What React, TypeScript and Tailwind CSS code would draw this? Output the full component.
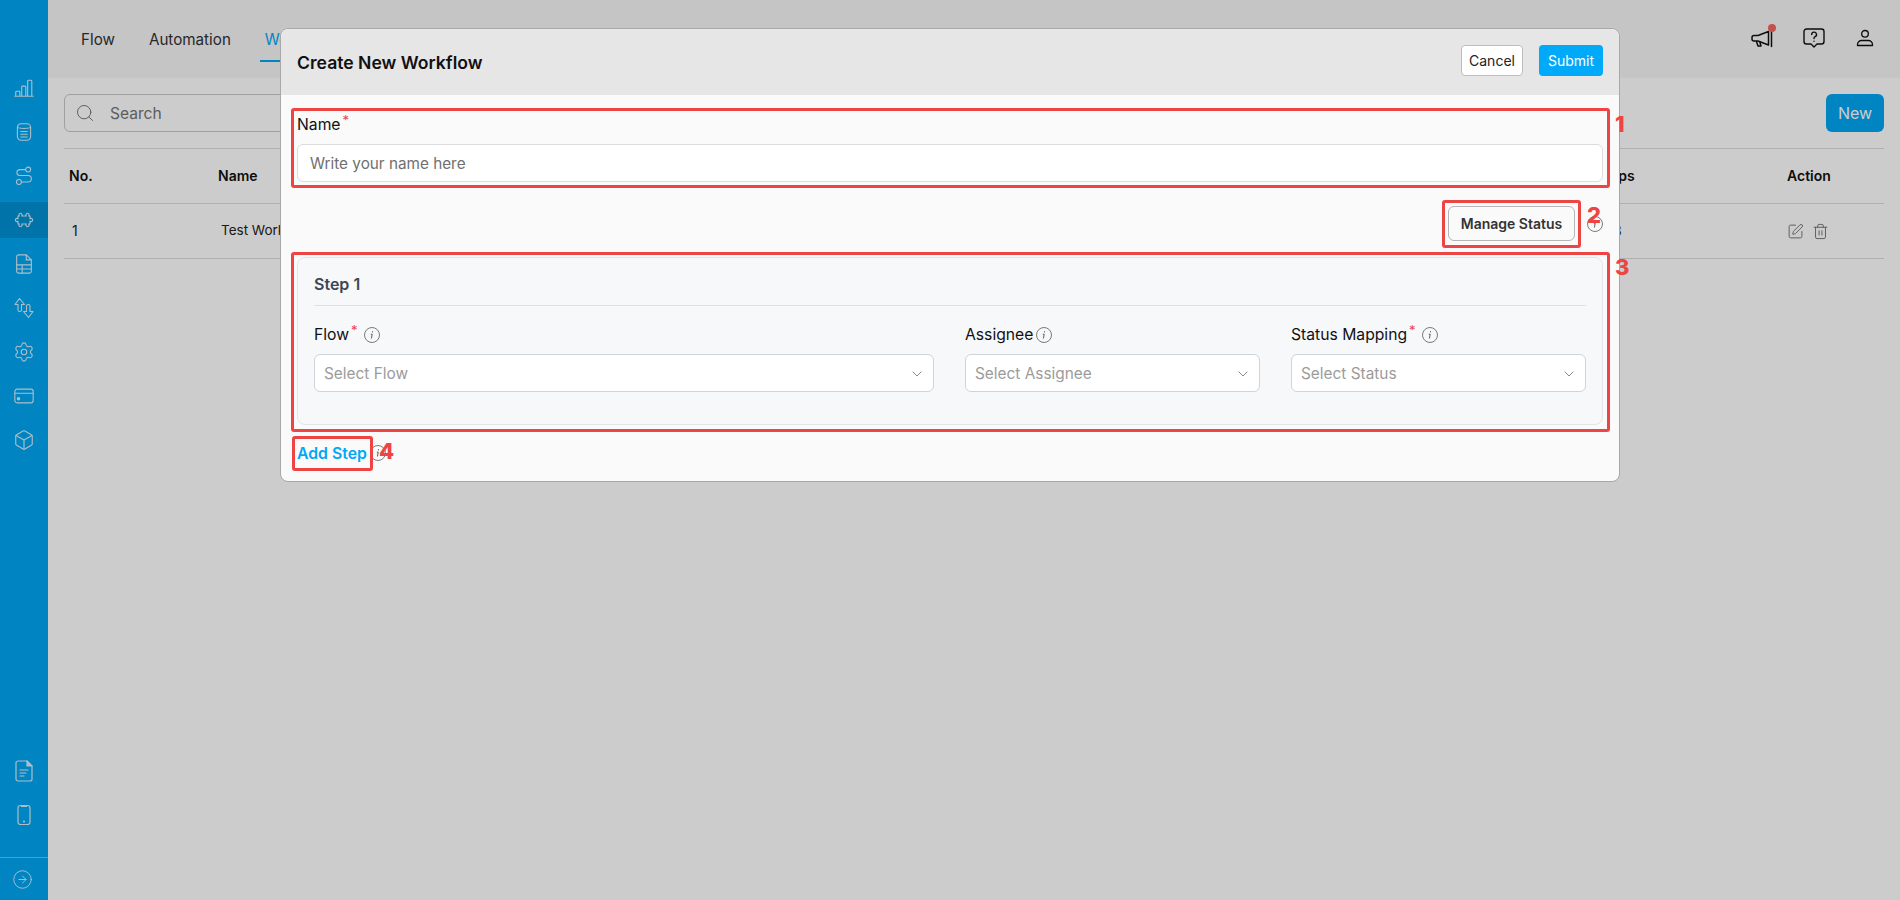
import { FC, ReactNode } from "react";
import { Box, ChevronDown, CircleArrowRight, Search, Settings, SquarePen, Trash2 } from "lucide-react";

const font = { fontFamily: "Inter, 'Noto Sans', sans-serif" };

const Ico: FC<{ children: ReactNode; className?: string; sw?: number }> = ({ children, className = "h-[22px] w-[22px]", sw = 1.2 }) => (
  <svg viewBox="0 0 24 24" fill="none" stroke="currentColor" strokeWidth={sw} strokeLinecap="round" strokeLinejoin="round" className={className}>
    {children}
  </svg>
);

// sidebar icons that the packages have no close match for
const BarsIcon = () => (
  <Ico>
    <path d="M2 21h20M3 21v-4.500a1 1 0 0 1 1-1h2.500a1 1 0 0 1 1 1V21M9.500 21V11a1 1 0 0 1 1-1H13a1 1 0 0 1 1 1v10M16 21V4.500a1 1 0 0 1 1-1h2.500a1 1 0 0 1 1 1V21" />
  </Ico>
);
const DbIcon = () => (
  <Ico>
    <rect x="4.800" y="3" width="14.400" height="18" rx="4" />
    <path d="M5 7c2 1.500 12 1.500 14 0M8.500 11.500h7M8.500 14.500h7M8.500 17.500h7" />
  </Ico>
);
const RouteIcon = () => (
  <Ico>
    <circle cx="16.500" cy="5" r="2.700" />
    <circle cx="6.500" cy="18.500" r="2.700" />
    <path d="M13.500 5H7.500a3 3 0 0 0 0 6.500h9a3.400 3.400 0 0 1 0 7H10" />
  </Ico>
);
const PuzzleIcon = () => (
  <Ico className="h-6 w-6" sw={1.1}>
    <path d="M6 8h1.300a1.600 1.600 0 1 1 2.400 0h4.600a1.600 1.600 0 1 1 2.400 0H18v2.800a1.600 1.600 0 1 1 0 2.400V16h-1.300a1.600 1.600 0 1 1-2.400 0H9.700a1.600 1.600 0 1 1-2.400 0H6v-2.800a1.600 1.600 0 1 1 0-2.400Z" />
  </Ico>
);
const SheetIcon = () => (
  <Ico>
    <path d="M6 2h8.500L20 7.500V20a2 2 0 0 1-2 2H6a2 2 0 0 1-2-2V4a2 2 0 0 1 2-2Z" />
    <path d="M14.500 2v5.500H20M4 13h16M4 17.500h16M10 13v9" />
  </Ico>
);
const SwapIcon = () => (
  <Ico className="h-6 w-6" sw={1.1}>
    <path d="M7.500 2.500 3 8.500h3v5.500c0 1 1 1.500 1.800 1.500S9.500 15 9.500 14V8.500h3ZM16.500 21.500l4.500-6h-3V10c0-1-1-1.500-1.800-1.500S14.500 9 14.500 10v5.500h-3Z" />
  </Ico>
);
const CardIcon = () => (
  <Ico>
    <rect x="2" y="4.500" width="20" height="15" rx="2.500" />
    <path d="M2 9h20" />
    <circle cx="6" cy="15" r="1.300" fill="currentColor" />
  </Ico>
);
const DocIcon = () => (
  <Ico className="h-6 w-6">
    <path d="M6 2h9l5 5v13a2 2 0 0 1-2 2H6a2 2 0 0 1-2-2V4a2 2 0 0 1 2-2Z" />
    <path d="M15 2v5h5Z" fill="currentColor" />
    <path d="M8 11h8M8 14h6M8 17h4" />
  </Ico>
);
const PhoneIcon = () => (
  <Ico className="h-6 w-6">
    <rect x="6" y="2.500" width="12" height="19" rx="2.500" />
    <path d="M9.500 3.500h5" />
    <circle cx="12" cy="18.500" r=".5" fill="currentColor" />
  </Ico>
);
const MegaphoneIcon = () => (
  <Ico className="h-6 w-6" sw={1.5}>
    <path d="M21.500 4.500v16" />
    <path d="M18.500 5.500 8 9.500H4a2 2 0 0 0-2 2v1.500a2 2 0 0 0 2 2h4l10.500 4Z" />
    <path d="M6.500 15.500 8 20h3l-1.200-4.200" />
  </Ico>
);
const HelpIcon = () => (
  <Ico className="h-[24px] w-[24px]" sw={1.4}>
    <path d="M4.500 3h15A2.500 2.500 0 0 1 22 5.500v10a2.500 2.500 0 0 1-2.500 2.500H15l-3 3-3-3H4.500A2.500 2.500 0 0 1 2 15.500v-10A2.500 2.500 0 0 1 4.500 3Z" />
    <path d="M9.700 8.500a2.400 2.400 0 1 1 3.400 2.200c-.7.400-1.100.9-1.100 1.800M12 15.200v.1" />
  </Ico>
);
const UserIcon = () => (
  <Ico className="h-5 w-5" sw={1.6}>
    <circle cx="12" cy="7" r="4" />
    <path d="M3 21v-1a5 5 0 0 1 5-5h8a5 5 0 0 1 5 5v1Z" />
  </Ico>
);
const InfoIcon: FC<{ className?: string }> = ({ className = "text-[#5a5a5a]" }) => (
  <svg viewBox="0 0 16 16" fill="none" stroke="currentColor" className={`h-4 w-4 shrink-0 ${className}`}>
    <circle cx="8" cy="8" r="7.500" strokeWidth=".8" />
    <path d="M7.200 7.200h1l-.7 3.900M8.500 4.600v.4" strokeWidth="1" strokeLinecap="round" />
  </svg>
);

const navTop = [
  { icon: <BarsIcon /> },
  { icon: <DbIcon /> },
  { icon: <RouteIcon /> },
  { icon: <PuzzleIcon />, active: true },
  { icon: <SheetIcon /> },
  { icon: <SwapIcon /> },
  { icon: <Settings className="h-[22px] w-[22px]" strokeWidth={1.2} /> },
  { icon: <CardIcon /> },
  { icon: <Box className="h-[22px] w-[22px]" strokeWidth={1.2} /> },
];

const Sidebar = () => (
  <aside className="flex h-full w-12 shrink-0 flex-col bg-[#00a6f3] text-[#d8eef9]">
    <div className="flex flex-1 flex-col gap-2 pt-[70px]">
      {navTop.map((item, i) => (
        <div key={i} className={`flex h-9 items-center justify-center ${item.active ? "bg-[#0090d2]" : ""}`}>
          {item.icon}
        </div>
      ))}
    </div>
    <div className="pb-[20px]">
      <div className="flex h-11 items-center justify-center pr-[1px]"><DocIcon /></div>
      <div className="flex h-11 items-center justify-center"><PhoneIcon /></div>
    </div>
    <div className="flex h-[43px] items-center justify-center border-t border-[#66c9f7] pr-[3px]">
      <CircleArrowRight className="h-[21px] w-[21px]" strokeWidth={1.1} />
    </div>
  </aside>
);

const TopBar = () => (
  <header className="flex h-[78px] items-start justify-between bg-[#f7f7f7] pl-[28px] pr-[25px]">
    <nav className="flex gap-6 pt-[28px] text-[15.2px] leading-6 text-[#333]">
      <div className="px-[5px] pb-[8px]">Flow</div>
      <div className="px-[5px] pb-[8px]">Automation</div>
      <div className="border-b-2 border-[#00a6f3] px-[5px] pb-[8px] text-[#00a6f3]">Workflow</div>
    </nav>
    <div className="flex items-center gap-[28px] pt-[26px] text-[#111]">
      <div className="relative">
        <MegaphoneIcon />
        <span className="absolute -right-[2px] -top-[2px] h-2 w-2 rounded-full bg-[#f5665f]" />
      </div>
      <HelpIcon />
      <div className="ml-[1px]"><UserIcon /></div>
    </div>
  </header>
);

const Table = () => (
  <div className="mt-4 border-t border-[#dcdcdc] text-sm text-[#222]">
    <div className="grid h-[55px] grid-cols-[149px_1378px_191px_1fr] items-center border-b border-[#dcdcdc] pl-[5px] font-semibold text-[#111]">
      <div>No.</div>
      <div>Name</div>
      <div>Steps</div>
      <div>Action</div>
    </div>
    <div className="grid h-[55px] grid-cols-[149px_1378px_191px_1fr] items-center border-b border-[#dcdcdc] pl-[5px]">
      <div className="pl-[3px]">1</div>
      <div className="pl-[3px] text-[13.5px]">Test Workflow</div>
      <div className="pl-[17px]">3</div>
      <div className="flex items-center gap-[8px] text-[#777]">
        <SquarePen className="h-[17px] w-[17px]" strokeWidth={1.4} />
        <Trash2 className="h-[17px] w-[17px]" strokeWidth={1.4} />
      </div>
    </div>
  </div>
);

const Star = () => <span className="ml-[2px] -translate-y-[5px] text-[13px] leading-none text-[#ef4444]">*</span>;

const Field: FC<{ label: string; required?: boolean; placeholder: string }> = ({ label, required, placeholder }) => (
  <div>
    <div className="flex h-6 items-center pt-[2px] text-[15.7px] text-[#111]">
      {label}
      {required && <Star />}
      <span className={required ? "ml-[6px]" : "ml-[3px]"}>
        <InfoIcon />
      </span>
    </div>
    <div className="mt-2 flex h-[38px] items-center justify-between rounded-md border border-[#ced4da] bg-white pl-[9px] pr-[8px] pt-[2px] text-[15.4px] text-[#9b9b9b]">
      <span>{placeholder}</span>
      <ChevronDown className="h-4 w-4 text-[#777]" strokeWidth={1.3} />
    </div>
  </div>
);

// red boxes and numbers someone drew over the screenshot
const Mark: FC<{ className: string }> = ({ className }) => (
  <div className={`pointer-events-none absolute rounded-[3px] border-[3px] border-[#ef4444] ${className}`} />
);
const MarkNo: FC<{ n: number; className: string }> = ({ n, className }) => (
  <div className={`pointer-events-none absolute text-[22px] font-extrabold leading-none text-[#ef4444] ${className}`}>{n}</div>
);

const Modal = () => (
  <div className="absolute left-[280px] top-[28px] w-[1340px] rounded-lg border border-[#a8a8a8] bg-[#fafafa]">
    <div className="flex h-[66px] items-center justify-between rounded-t-lg bg-[#e6e6e6] px-4">
      <h2 className="mt-[2px] text-[17.6px] font-semibold text-[#111]">Create New Workflow</h2>
      <div className="mb-[3px] flex gap-4 text-sm">
        <button className="h-[31px] w-[62px] rounded border border-[#bdbdbd] bg-white text-[#222]">Cancel</button>
        <button className="h-[31px] w-[64px] rounded bg-[#00aaf9] text-white">Submit</button>
      </div>
    </div>

    <div className="px-4 pb-4 pt-[17px]">
      <div className="flex h-6 items-center pt-[2px] text-[15.7px] text-[#111]">
        Name
        <Star />
      </div>
      <div className="mt-2 flex h-[38px] items-center rounded-md border border-[#dcdcdc] bg-white pl-[12px] pt-[2px] text-[15.3px] text-[#6f6f6f]">
        Write your name here
      </div>

      <div className="mt-6 flex items-center justify-end gap-3">
        <button className="h-[35px] w-[127px] rounded-md border border-[#b5b5b5] bg-[#fafafa] text-sm font-semibold text-[#333]">
          Manage Status
        </button>
        <InfoIcon />
      </div>

      <div className="mt-4 rounded-lg border border-[#e3e5e8] bg-[#f7f8fa] px-4 pb-[32px] pt-[14px]">
        <div className="border-b border-[#dfe1e5] pb-[9px] text-base font-semibold leading-6 text-[#3f4651]">Step 1</div>
        <div className="mt-[16px] grid grid-cols-[620px_295px_295px] gap-x-[31px]">
          <Field label="Flow" required placeholder="Select Flow" />
          <Field label="Assignee" placeholder="Select Assignee" />
          <Field label="Status Mapping" required placeholder="Select Status" />
        </div>
      </div>

      <div className="mt-[16px] flex h-6 items-center gap-[3px]">
        <span className="pt-[2px] text-[15.8px] font-semibold text-[#00a8f5]">Add Step</span>
        <InfoIcon />
      </div>
    </div>

    <Mark className="left-[10px] top-[79px] h-[80px] w-[1319px]" />
    <MarkNo n={1} className="left-[1334px] top-[84px]" />
    <Mark className="left-[1161px] top-[171px] h-[48px] w-[139px]" />
    <MarkNo n={2} className="left-[1306px] top-[175px]" />
    <Mark className="left-[10px] top-[223px] h-[180px] w-[1319px]" />
    <MarkNo n={3} className="left-[1334px] top-[227px]" />
    <Mark className="left-[11px] top-[407px] h-[35px] w-[81px]" />
    <MarkNo n={4} className="left-[98px] top-[411px]" />
  </div>
);

export default function App() {
  return (
    <div className="relative flex h-screen w-full overflow-hidden bg-white" style={font}>
      <Sidebar />
      <main className="min-w-0 flex-1">
        <TopBar />
        <div className="px-4 pt-4">
          <div className="flex items-center justify-between">
            <div className="flex h-[38px] w-[420px] items-center rounded-md border border-[#c9c9c9] pl-[10px] pt-[2px] text-[15.6px] text-[#757575]">
              <Search className="mr-[15px] -mt-[2px] h-5 w-5 text-[#777]" strokeWidth={1.2} />
              Search
            </div>
            <button className="h-[38px] w-[58px] rounded-md bg-[#00a6f3] text-base text-white">New</button>
          </div>
          <Table />
        </div>
      </main>
      <div className="absolute inset-0 bg-black/20" />
      <Modal />
    </div>
  );
}
